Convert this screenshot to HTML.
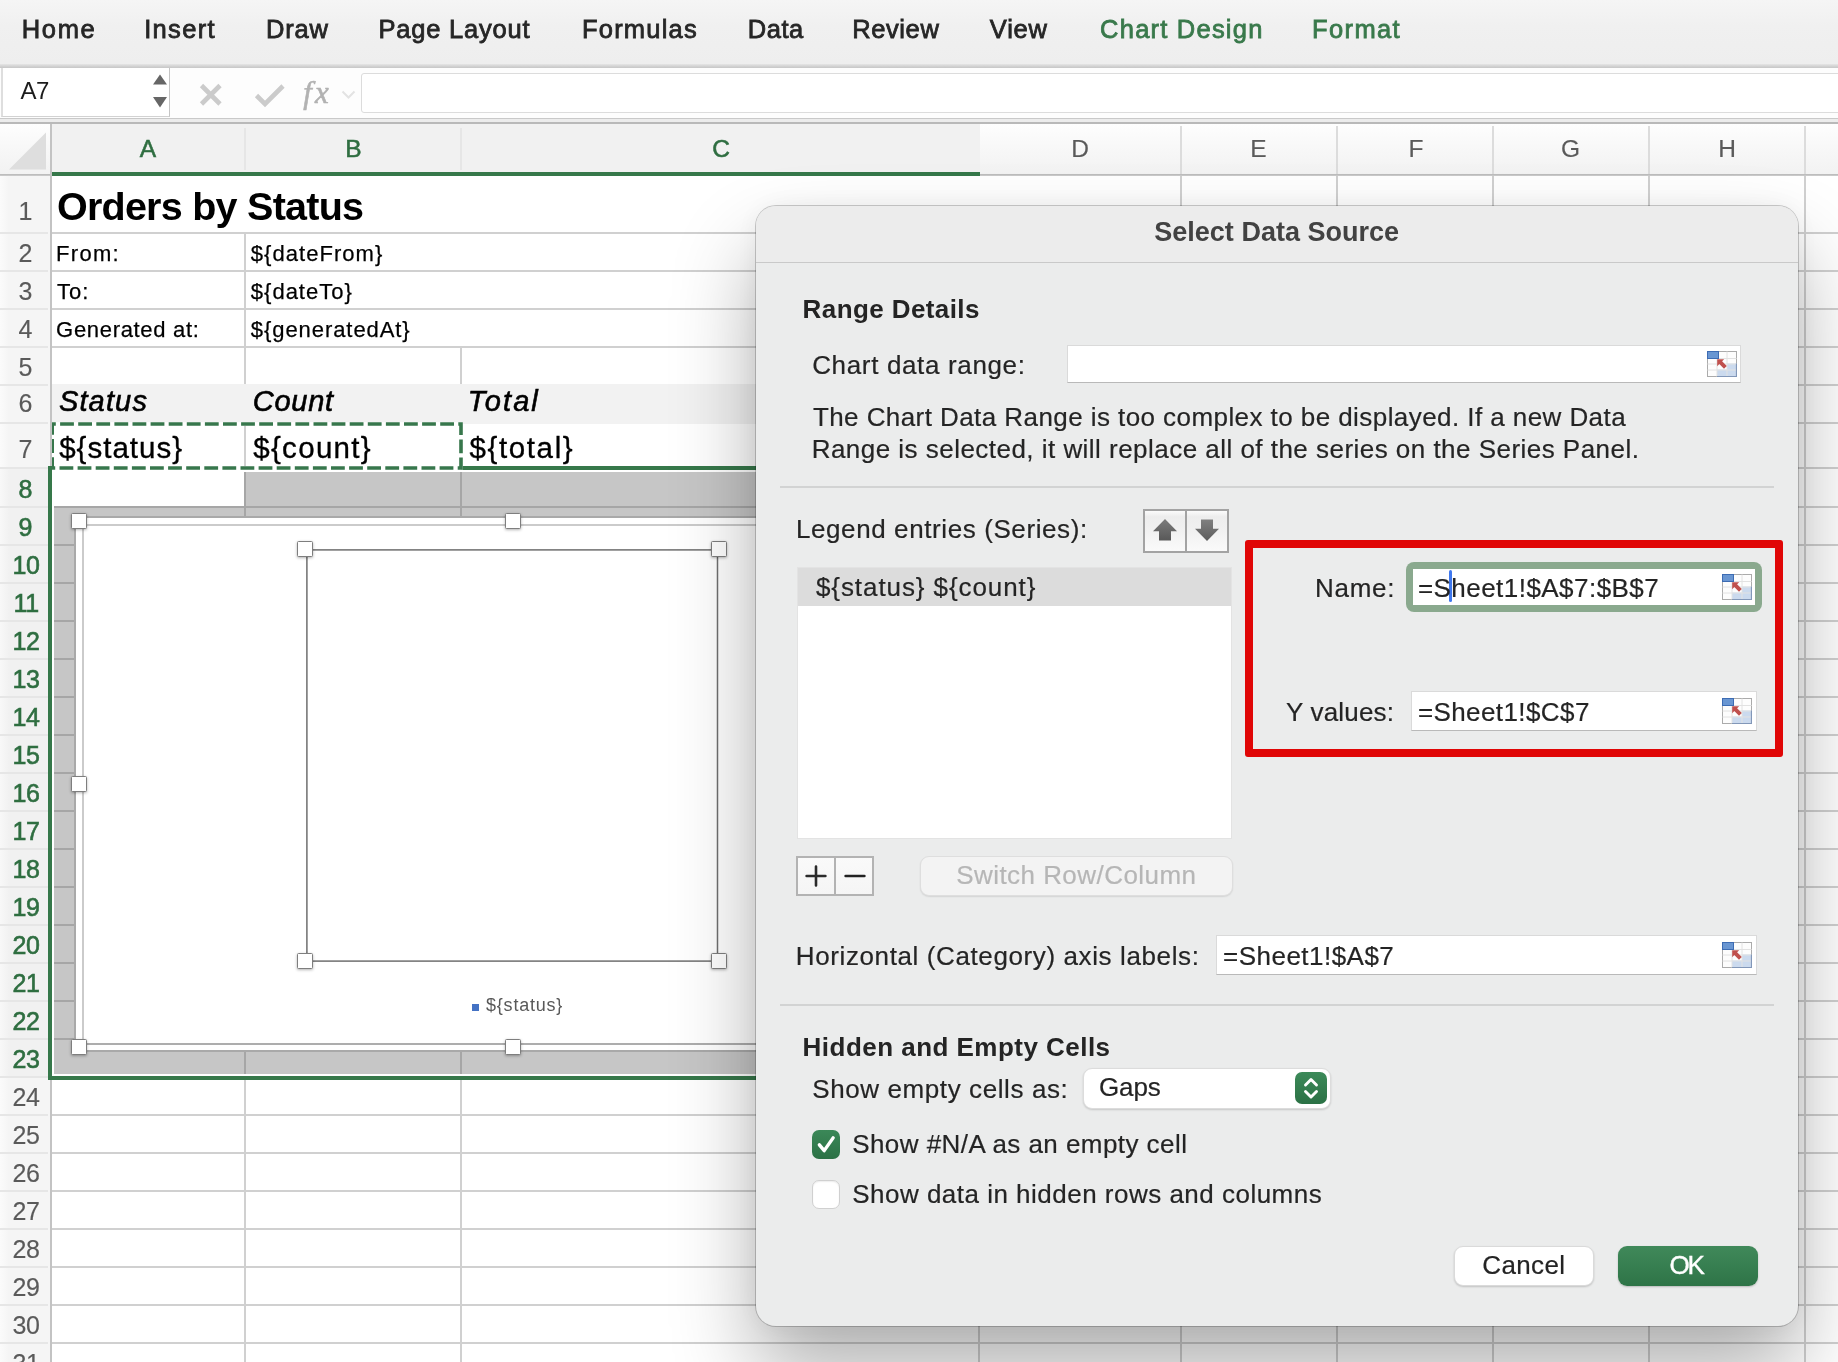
<!DOCTYPE html>
<html lang="en">
<head>
<meta charset="utf-8">
<title>Select Data Source</title>
<style>
html,body{margin:0;padding:0;}
body{width:1838px;height:1362px;overflow:hidden;position:relative;background:#fff;font-family:'Liberation Sans',sans-serif;}
#root{position:absolute;left:0;top:0;width:1838px;height:1362px;overflow:hidden;background:#fff;}
.l{position:absolute;}
.t{position:absolute;white-space:pre;}
#sheet,#chrome,#dialog{will-change:transform;}
.abs{position:absolute;}
.handle{position:absolute;width:14px;height:14px;background:#fff;border:1px solid #7e7e7e;border-radius:1.5px;box-shadow:0 1px 3px rgba(0,0,0,.30);}
.inp{position:absolute;background:#fff;border:1px solid #dadada;border-bottom-color:#b9b9b9;box-sizing:border-box;}
.sep{position:absolute;height:1px;background:#d2d3d3;}
</style>
</head>
<body>
<div id="root">

<!-- ======================= SHEET ======================= -->
<div id="sheet" class="abs" style="left:0;top:0;width:1838px;height:1362px;">
<div class="l" style="left:52.0px;top:231.5px;width:1786.0px;height:2px;background:#d0d0d0"></div>
<div class="l" style="left:52.0px;top:270.0px;width:1786.0px;height:2px;background:#d0d0d0"></div>
<div class="l" style="left:52.0px;top:308.0px;width:1786.0px;height:2px;background:#d0d0d0"></div>
<div class="l" style="left:52.0px;top:346.0px;width:1786.0px;height:2px;background:#d0d0d0"></div>
<div class="l" style="left:52.0px;top:384.0px;width:1786.0px;height:2px;background:#d0d0d0"></div>
<div class="l" style="left:52.0px;top:1114.0px;width:1786.0px;height:2px;background:#d0d0d0"></div>
<div class="l" style="left:52.0px;top:1152.0px;width:1786.0px;height:2px;background:#d0d0d0"></div>
<div class="l" style="left:52.0px;top:1190.0px;width:1786.0px;height:2px;background:#d0d0d0"></div>
<div class="l" style="left:52.0px;top:1228.0px;width:1786.0px;height:2px;background:#d0d0d0"></div>
<div class="l" style="left:52.0px;top:1266.0px;width:1786.0px;height:2px;background:#d0d0d0"></div>
<div class="l" style="left:52.0px;top:1304.0px;width:1786.0px;height:2px;background:#d0d0d0"></div>
<div class="l" style="left:52.0px;top:1342.0px;width:1786.0px;height:2px;background:#d0d0d0"></div>
<div class="l" style="left:52.0px;top:1380.0px;width:1786.0px;height:2px;background:#d0d0d0"></div>
<div class="l" style="left:978.8px;top:422.0px;width:859.2px;height:2px;background:#d0d0d0"></div>
<div class="l" style="left:978.8px;top:467.0px;width:859.2px;height:2px;background:#d0d0d0"></div>
<div class="l" style="left:978.8px;top:506.0px;width:859.2px;height:2px;background:#d0d0d0"></div>
<div class="l" style="left:978.8px;top:544.0px;width:859.2px;height:2px;background:#d0d0d0"></div>
<div class="l" style="left:978.8px;top:582.0px;width:859.2px;height:2px;background:#d0d0d0"></div>
<div class="l" style="left:978.8px;top:620.0px;width:859.2px;height:2px;background:#d0d0d0"></div>
<div class="l" style="left:978.8px;top:658.0px;width:859.2px;height:2px;background:#d0d0d0"></div>
<div class="l" style="left:978.8px;top:696.0px;width:859.2px;height:2px;background:#d0d0d0"></div>
<div class="l" style="left:978.8px;top:734.0px;width:859.2px;height:2px;background:#d0d0d0"></div>
<div class="l" style="left:978.8px;top:772.0px;width:859.2px;height:2px;background:#d0d0d0"></div>
<div class="l" style="left:978.8px;top:810.0px;width:859.2px;height:2px;background:#d0d0d0"></div>
<div class="l" style="left:978.8px;top:848.0px;width:859.2px;height:2px;background:#d0d0d0"></div>
<div class="l" style="left:978.8px;top:886.0px;width:859.2px;height:2px;background:#d0d0d0"></div>
<div class="l" style="left:978.8px;top:924.0px;width:859.2px;height:2px;background:#d0d0d0"></div>
<div class="l" style="left:978.8px;top:962.0px;width:859.2px;height:2px;background:#d0d0d0"></div>
<div class="l" style="left:978.8px;top:1000.0px;width:859.2px;height:2px;background:#d0d0d0"></div>
<div class="l" style="left:978.8px;top:1038.0px;width:859.2px;height:2px;background:#d0d0d0"></div>
<div class="l" style="left:978.8px;top:1076.0px;width:859.2px;height:2px;background:#d0d0d0"></div>
<div class="l" style="left:52.0px;top:467.0px;width:930.0px;height:2px;background:#d0d0d0"></div>
<div class="l" style="left:244.0px;top:232.5px;width:2px;height:152.5px;background:#d0d0d0"></div>
<div class="l" style="left:244.0px;top:423.0px;width:2px;height:45.0px;background:#d0d0d0"></div>
<div class="l" style="left:244.0px;top:1077.0px;width:2px;height:285.0px;background:#d0d0d0"></div>
<div class="l" style="left:460.0px;top:347.0px;width:2px;height:38.0px;background:#d0d0d0"></div>
<div class="l" style="left:460.0px;top:1077.0px;width:2px;height:285.0px;background:#d0d0d0"></div>
<div class="l" style="left:977.8px;top:232.5px;width:2px;height:1129.5px;background:#d0d0d0"></div>
<div class="l" style="left:1179.5px;top:176.0px;width:2px;height:1186.0px;background:#d0d0d0"></div>
<div class="l" style="left:1335.8px;top:176.0px;width:2px;height:1186.0px;background:#d0d0d0"></div>
<div class="l" style="left:1492.0px;top:176.0px;width:2px;height:1186.0px;background:#d0d0d0"></div>
<div class="l" style="left:1648.3px;top:176.0px;width:2px;height:1186.0px;background:#d0d0d0"></div>
<div class="l" style="left:1804.0px;top:176.0px;width:2px;height:1186.0px;background:#d0d0d0"></div>
<div class="l" style="left:52.0px;top:384.0px;width:927.8px;height:39.5px;background:#f2f2f2"></div>
<div class="l" style="left:54.0px;top:507.0px;width:924.8px;height:567.0px;background:#c6c6c6"></div>
<div class="l" style="left:245.0px;top:471.5px;width:733.8px;height:36.5px;background:#c6c6c6"></div>
<div class="l" style="left:54.0px;top:544.0px;width:924.8px;height:2px;background:#a6a6a6"></div>
<div class="l" style="left:54.0px;top:582.0px;width:924.8px;height:2px;background:#a6a6a6"></div>
<div class="l" style="left:54.0px;top:620.0px;width:924.8px;height:2px;background:#a6a6a6"></div>
<div class="l" style="left:54.0px;top:658.0px;width:924.8px;height:2px;background:#a6a6a6"></div>
<div class="l" style="left:54.0px;top:696.0px;width:924.8px;height:2px;background:#a6a6a6"></div>
<div class="l" style="left:54.0px;top:734.0px;width:924.8px;height:2px;background:#a6a6a6"></div>
<div class="l" style="left:54.0px;top:772.0px;width:924.8px;height:2px;background:#a6a6a6"></div>
<div class="l" style="left:54.0px;top:810.0px;width:924.8px;height:2px;background:#a6a6a6"></div>
<div class="l" style="left:54.0px;top:848.0px;width:924.8px;height:2px;background:#a6a6a6"></div>
<div class="l" style="left:54.0px;top:886.0px;width:924.8px;height:2px;background:#a6a6a6"></div>
<div class="l" style="left:54.0px;top:924.0px;width:924.8px;height:2px;background:#a6a6a6"></div>
<div class="l" style="left:54.0px;top:962.0px;width:924.8px;height:2px;background:#a6a6a6"></div>
<div class="l" style="left:54.0px;top:1000.0px;width:924.8px;height:2px;background:#a6a6a6"></div>
<div class="l" style="left:54.0px;top:1038.0px;width:924.8px;height:2px;background:#a6a6a6"></div>
<div class="l" style="left:54.0px;top:506.0px;width:924.8px;height:2px;background:#a6a6a6"></div>
<div class="l" style="left:244.0px;top:471.5px;width:2px;height:602.5px;background:#a6a6a6"></div>
<div class="l" style="left:460.0px;top:471.5px;width:2px;height:602.5px;background:#a6a6a6"></div>

<!-- chart object -->
<div class="abs" style="left:74px;top:516px;width:912px;height:532px;background:#fff;border:2px solid #a9a9a9;"></div>
<div class="abs" style="left:82px;top:524px;width:900px;height:516.5px;border:2px solid #cbcbcb;border-bottom-color:#adadad;background:#fff;"></div>
<svg class="abs" style="left:300px;top:543px;" width="424" height="424" viewBox="0 0 424 424"><rect x="6.9" y="6.9" width="410.6" height="411.2" fill="none" stroke="#6f6f6f" stroke-width="1.5"/></svg>
<div class="abs" style="left:471.5px;top:1004px;width:7.5px;height:7px;background:#4472c4;"></div>
<div class="handle" style="left:71px;top:513px;"></div>
<div class="handle" style="left:505px;top:513px;"></div>
<div class="handle" style="left:71px;top:776px;"></div>
<div class="handle" style="left:71px;top:1039px;"></div>
<div class="handle" style="left:505px;top:1039px;"></div>
<div class="handle" style="left:297px;top:541px;"></div>
<div class="handle" style="left:711px;top:541px;"></div>
<div class="handle" style="left:297px;top:953px;"></div>
<div class="handle" style="left:711px;top:953px;"></div>

<!-- selection borders -->
<div class="abs" style="left:461px;top:465.5px;width:600px;height:4px;background:#36784a;"></div>
<div class="abs" style="left:48px;top:466px;width:4px;height:614px;background:#36784a;"></div>
<div class="abs" style="left:48px;top:1076px;width:935px;height:4px;background:#36784a;"></div>
<!-- marching ants A7:B7 -->
<svg class="abs" style="left:48px;top:418px;" width="420" height="56" viewBox="0 0 420 56">
  <rect x="4.2" y="6" width="408.8" height="44" fill="none" stroke="#fff" stroke-width="3.6"/>
  <rect x="4.2" y="6" width="408.8" height="44" fill="none" stroke="#37774c" stroke-width="3.6" stroke-dasharray="13.8 4.3" stroke-dashoffset="10.2"/>
</svg>

<!-- column header band -->
<div class="abs" style="left:0;top:123px;width:1838px;height:52px;background:linear-gradient(180deg,#fefefe 0,#f8f8f8 45%,#f2f2f2 100%);"></div>
<div class="abs" style="left:0;top:174px;width:1838px;height:2px;background:linear-gradient(180deg,#bdbdbd 0,#bdbdbd 60%,#dedede 100%);"></div>
<div class="abs" style="left:52px;top:172px;width:928px;height:4px;background:#36784a;"></div>
<div class="abs" style="left:52px;top:123px;width:928px;height:49px;background:#f1f1f1;"></div>
<!-- header separators -->
<div class="l" style="left:244px;top:128px;width:2px;height:42px;background:#e6e6e6"></div>
<div class="l" style="left:460px;top:128px;width:2px;height:42px;background:#e6e6e6"></div>
<div class="l" style="left:1179.5px;top:126px;width:2px;height:48px;background:#dcdcdc"></div>
<div class="l" style="left:1335.8px;top:126px;width:2px;height:48px;background:#dcdcdc"></div>
<div class="l" style="left:1492px;top:126px;width:2px;height:48px;background:#dcdcdc"></div>
<div class="l" style="left:1648.3px;top:126px;width:2px;height:48px;background:#dcdcdc"></div>
<div class="l" style="left:1804px;top:126px;width:2px;height:48px;background:#dcdcdc"></div>

<!-- row header band -->
<div class="abs" style="left:0;top:176px;width:50px;height:1186px;background:linear-gradient(90deg,#fbfbfb 0,#f5f5f5 9px,#f5f5f5 100%);"></div>
<div class="abs" style="left:0;top:468px;width:48px;height:610px;background:linear-gradient(90deg,#f8f8f8 0,#f1f1f1 9px,#f1f1f1 100%);"></div>
<div class="abs" style="left:50px;top:124px;width:2px;height:1238px;background:#c3c3c3;"></div>
<div class="abs" style="left:48px;top:466px;width:4px;height:614px;background:#36784a;"></div>
<!-- select-all triangle -->
<svg class="abs" style="left:0;top:123px;" width="52" height="52" viewBox="0 0 52 52"><path d="M46 9.5V46.5H9z" fill="#dedede"/></svg>
<div class="l" style="left:0.0px;top:231.5px;width:48.0px;height:2px;background:#e6e6e6"></div>
<div class="l" style="left:0.0px;top:270.0px;width:48.0px;height:2px;background:#e6e6e6"></div>
<div class="l" style="left:0.0px;top:308.0px;width:48.0px;height:2px;background:#e6e6e6"></div>
<div class="l" style="left:0.0px;top:346.0px;width:48.0px;height:2px;background:#e6e6e6"></div>
<div class="l" style="left:0.0px;top:384.0px;width:48.0px;height:2px;background:#e6e6e6"></div>
<div class="l" style="left:0.0px;top:422.0px;width:48.0px;height:2px;background:#e6e6e6"></div>
<div class="l" style="left:0.0px;top:467.0px;width:48.0px;height:2px;background:#e6e6e6"></div>
<div class="l" style="left:0.0px;top:506.0px;width:48.0px;height:2px;background:#e6e6e6"></div>
<div class="l" style="left:0.0px;top:544.0px;width:48.0px;height:2px;background:#e6e6e6"></div>
<div class="l" style="left:0.0px;top:582.0px;width:48.0px;height:2px;background:#e6e6e6"></div>
<div class="l" style="left:0.0px;top:620.0px;width:48.0px;height:2px;background:#e6e6e6"></div>
<div class="l" style="left:0.0px;top:658.0px;width:48.0px;height:2px;background:#e6e6e6"></div>
<div class="l" style="left:0.0px;top:696.0px;width:48.0px;height:2px;background:#e6e6e6"></div>
<div class="l" style="left:0.0px;top:734.0px;width:48.0px;height:2px;background:#e6e6e6"></div>
<div class="l" style="left:0.0px;top:772.0px;width:48.0px;height:2px;background:#e6e6e6"></div>
<div class="l" style="left:0.0px;top:810.0px;width:48.0px;height:2px;background:#e6e6e6"></div>
<div class="l" style="left:0.0px;top:848.0px;width:48.0px;height:2px;background:#e6e6e6"></div>
<div class="l" style="left:0.0px;top:886.0px;width:48.0px;height:2px;background:#e6e6e6"></div>
<div class="l" style="left:0.0px;top:924.0px;width:48.0px;height:2px;background:#e6e6e6"></div>
<div class="l" style="left:0.0px;top:962.0px;width:48.0px;height:2px;background:#e6e6e6"></div>
<div class="l" style="left:0.0px;top:1000.0px;width:48.0px;height:2px;background:#e6e6e6"></div>
<div class="l" style="left:0.0px;top:1038.0px;width:48.0px;height:2px;background:#e6e6e6"></div>
<div class="l" style="left:0.0px;top:1076.0px;width:48.0px;height:2px;background:#e6e6e6"></div>
<div class="l" style="left:0.0px;top:1114.0px;width:48.0px;height:2px;background:#e6e6e6"></div>
<div class="l" style="left:0.0px;top:1152.0px;width:48.0px;height:2px;background:#e6e6e6"></div>
<div class="l" style="left:0.0px;top:1190.0px;width:48.0px;height:2px;background:#e6e6e6"></div>
<div class="l" style="left:0.0px;top:1228.0px;width:48.0px;height:2px;background:#e6e6e6"></div>
<div class="l" style="left:0.0px;top:1266.0px;width:48.0px;height:2px;background:#e6e6e6"></div>
<div class="l" style="left:0.0px;top:1304.0px;width:48.0px;height:2px;background:#e6e6e6"></div>
<div class="l" style="left:0.0px;top:1342.0px;width:48.0px;height:2px;background:#e6e6e6"></div>
<div class="l" style="left:0.0px;top:1380.0px;width:48.0px;height:2px;background:#e6e6e6"></div>

<span class="t" style="left:148.00px;top:137.3px;font-family:'Liberation Sans', sans-serif;font-size:24.5px;line-height:24.5px;font-weight:400;font-style:normal;color:#2f6e41;letter-spacing:0.00px;-webkit-text-stroke:0.55px #2f6e41;transform:translateX(-50%);">A</span>
<span class="t" style="left:353.50px;top:137.3px;font-family:'Liberation Sans', sans-serif;font-size:24.5px;line-height:24.5px;font-weight:400;font-style:normal;color:#2f6e41;letter-spacing:0.00px;-webkit-text-stroke:0.55px #2f6e41;transform:translateX(-50%);">B</span>
<span class="t" style="left:721.00px;top:137.3px;font-family:'Liberation Sans', sans-serif;font-size:24.5px;line-height:24.5px;font-weight:400;font-style:normal;color:#2f6e41;letter-spacing:0.00px;-webkit-text-stroke:0.55px #2f6e41;transform:translateX(-50%);">C</span>
<span class="t" style="left:1080.00px;top:137.3px;font-family:'Liberation Sans', sans-serif;font-size:24.5px;line-height:24.5px;font-weight:400;font-style:normal;color:#5a5a5a;letter-spacing:0.00px;-webkit-text-stroke:0.15px #5a5a5a;transform:translateX(-50%);">D</span>
<span class="t" style="left:1258.50px;top:137.3px;font-family:'Liberation Sans', sans-serif;font-size:24.5px;line-height:24.5px;font-weight:400;font-style:normal;color:#5a5a5a;letter-spacing:0.00px;-webkit-text-stroke:0.15px #5a5a5a;transform:translateX(-50%);">E</span>
<span class="t" style="left:1416.00px;top:137.3px;font-family:'Liberation Sans', sans-serif;font-size:24.5px;line-height:24.5px;font-weight:400;font-style:normal;color:#5a5a5a;letter-spacing:0.00px;-webkit-text-stroke:0.15px #5a5a5a;transform:translateX(-50%);">F</span>
<span class="t" style="left:1570.50px;top:137.3px;font-family:'Liberation Sans', sans-serif;font-size:24.5px;line-height:24.5px;font-weight:400;font-style:normal;color:#5a5a5a;letter-spacing:0.00px;-webkit-text-stroke:0.15px #5a5a5a;transform:translateX(-50%);">G</span>
<span class="t" style="left:1727.00px;top:137.3px;font-family:'Liberation Sans', sans-serif;font-size:24.5px;line-height:24.5px;font-weight:400;font-style:normal;color:#5a5a5a;letter-spacing:0.00px;-webkit-text-stroke:0.15px #5a5a5a;transform:translateX(-50%);">H</span>
<span class="t" style="left:25.20px;top:198.7px;font-family:'Liberation Sans', sans-serif;font-size:25px;line-height:25px;font-weight:400;font-style:normal;color:#5a5a5a;letter-spacing:0.00px;-webkit-text-stroke:0.15px #5a5a5a;transform:translateX(-50%);letter-spacing:-0.3px;">1</span>
<span class="t" style="left:25.20px;top:240.8px;font-family:'Liberation Sans', sans-serif;font-size:25px;line-height:25px;font-weight:400;font-style:normal;color:#5a5a5a;letter-spacing:0.00px;-webkit-text-stroke:0.15px #5a5a5a;transform:translateX(-50%);letter-spacing:-0.3px;">2</span>
<span class="t" style="left:25.20px;top:278.8px;font-family:'Liberation Sans', sans-serif;font-size:25px;line-height:25px;font-weight:400;font-style:normal;color:#5a5a5a;letter-spacing:0.00px;-webkit-text-stroke:0.15px #5a5a5a;transform:translateX(-50%);letter-spacing:-0.3px;">3</span>
<span class="t" style="left:25.20px;top:316.8px;font-family:'Liberation Sans', sans-serif;font-size:25px;line-height:25px;font-weight:400;font-style:normal;color:#5a5a5a;letter-spacing:0.00px;-webkit-text-stroke:0.15px #5a5a5a;transform:translateX(-50%);letter-spacing:-0.3px;">4</span>
<span class="t" style="left:25.20px;top:354.8px;font-family:'Liberation Sans', sans-serif;font-size:25px;line-height:25px;font-weight:400;font-style:normal;color:#5a5a5a;letter-spacing:0.00px;-webkit-text-stroke:0.15px #5a5a5a;transform:translateX(-50%);letter-spacing:-0.3px;">5</span>
<span class="t" style="left:25.20px;top:390.6px;font-family:'Liberation Sans', sans-serif;font-size:25px;line-height:25px;font-weight:400;font-style:normal;color:#5a5a5a;letter-spacing:0.00px;-webkit-text-stroke:0.15px #5a5a5a;transform:translateX(-50%);letter-spacing:-0.3px;">6</span>
<span class="t" style="left:25.20px;top:436.5px;font-family:'Liberation Sans', sans-serif;font-size:25px;line-height:25px;font-weight:400;font-style:normal;color:#5a5a5a;letter-spacing:0.00px;-webkit-text-stroke:0.15px #5a5a5a;transform:translateX(-50%);letter-spacing:-0.3px;">7</span>
<span class="t" style="left:25.20px;top:477.3px;font-family:'Liberation Sans', sans-serif;font-size:25px;line-height:25px;font-weight:400;font-style:normal;color:#2f6e41;letter-spacing:0.00px;-webkit-text-stroke:0.6px #2f6e41;transform:translateX(-50%);letter-spacing:-0.3px;">8</span>
<span class="t" style="left:25.20px;top:515.3px;font-family:'Liberation Sans', sans-serif;font-size:25px;line-height:25px;font-weight:400;font-style:normal;color:#2f6e41;letter-spacing:0.00px;-webkit-text-stroke:0.6px #2f6e41;transform:translateX(-50%);letter-spacing:-0.3px;">9</span>
<span class="t" style="left:26.10px;top:553.3px;font-family:'Liberation Sans', sans-serif;font-size:25px;line-height:25px;font-weight:400;font-style:normal;color:#2f6e41;letter-spacing:0.00px;-webkit-text-stroke:0.6px #2f6e41;transform:translateX(-50%);letter-spacing:-0.3px;">10</span>
<span class="t" style="left:26.10px;top:591.3px;font-family:'Liberation Sans', sans-serif;font-size:25px;line-height:25px;font-weight:400;font-style:normal;color:#2f6e41;letter-spacing:0.00px;-webkit-text-stroke:0.6px #2f6e41;transform:translateX(-50%);letter-spacing:-0.3px;">11</span>
<span class="t" style="left:26.10px;top:629.3px;font-family:'Liberation Sans', sans-serif;font-size:25px;line-height:25px;font-weight:400;font-style:normal;color:#2f6e41;letter-spacing:0.00px;-webkit-text-stroke:0.6px #2f6e41;transform:translateX(-50%);letter-spacing:-0.3px;">12</span>
<span class="t" style="left:26.10px;top:667.3px;font-family:'Liberation Sans', sans-serif;font-size:25px;line-height:25px;font-weight:400;font-style:normal;color:#2f6e41;letter-spacing:0.00px;-webkit-text-stroke:0.6px #2f6e41;transform:translateX(-50%);letter-spacing:-0.3px;">13</span>
<span class="t" style="left:26.10px;top:705.3px;font-family:'Liberation Sans', sans-serif;font-size:25px;line-height:25px;font-weight:400;font-style:normal;color:#2f6e41;letter-spacing:0.00px;-webkit-text-stroke:0.6px #2f6e41;transform:translateX(-50%);letter-spacing:-0.3px;">14</span>
<span class="t" style="left:26.10px;top:743.3px;font-family:'Liberation Sans', sans-serif;font-size:25px;line-height:25px;font-weight:400;font-style:normal;color:#2f6e41;letter-spacing:0.00px;-webkit-text-stroke:0.6px #2f6e41;transform:translateX(-50%);letter-spacing:-0.3px;">15</span>
<span class="t" style="left:26.10px;top:781.3px;font-family:'Liberation Sans', sans-serif;font-size:25px;line-height:25px;font-weight:400;font-style:normal;color:#2f6e41;letter-spacing:0.00px;-webkit-text-stroke:0.6px #2f6e41;transform:translateX(-50%);letter-spacing:-0.3px;">16</span>
<span class="t" style="left:26.10px;top:819.3px;font-family:'Liberation Sans', sans-serif;font-size:25px;line-height:25px;font-weight:400;font-style:normal;color:#2f6e41;letter-spacing:0.00px;-webkit-text-stroke:0.6px #2f6e41;transform:translateX(-50%);letter-spacing:-0.3px;">17</span>
<span class="t" style="left:26.10px;top:857.3px;font-family:'Liberation Sans', sans-serif;font-size:25px;line-height:25px;font-weight:400;font-style:normal;color:#2f6e41;letter-spacing:0.00px;-webkit-text-stroke:0.6px #2f6e41;transform:translateX(-50%);letter-spacing:-0.3px;">18</span>
<span class="t" style="left:26.10px;top:895.3px;font-family:'Liberation Sans', sans-serif;font-size:25px;line-height:25px;font-weight:400;font-style:normal;color:#2f6e41;letter-spacing:0.00px;-webkit-text-stroke:0.6px #2f6e41;transform:translateX(-50%);letter-spacing:-0.3px;">19</span>
<span class="t" style="left:26.10px;top:933.3px;font-family:'Liberation Sans', sans-serif;font-size:25px;line-height:25px;font-weight:400;font-style:normal;color:#2f6e41;letter-spacing:0.00px;-webkit-text-stroke:0.6px #2f6e41;transform:translateX(-50%);letter-spacing:-0.3px;">20</span>
<span class="t" style="left:26.10px;top:971.3px;font-family:'Liberation Sans', sans-serif;font-size:25px;line-height:25px;font-weight:400;font-style:normal;color:#2f6e41;letter-spacing:0.00px;-webkit-text-stroke:0.6px #2f6e41;transform:translateX(-50%);letter-spacing:-0.3px;">21</span>
<span class="t" style="left:26.10px;top:1009.3px;font-family:'Liberation Sans', sans-serif;font-size:25px;line-height:25px;font-weight:400;font-style:normal;color:#2f6e41;letter-spacing:0.00px;-webkit-text-stroke:0.6px #2f6e41;transform:translateX(-50%);letter-spacing:-0.3px;">22</span>
<span class="t" style="left:26.10px;top:1047.3px;font-family:'Liberation Sans', sans-serif;font-size:25px;line-height:25px;font-weight:400;font-style:normal;color:#2f6e41;letter-spacing:0.00px;-webkit-text-stroke:0.6px #2f6e41;transform:translateX(-50%);letter-spacing:-0.3px;">23</span>
<span class="t" style="left:26.10px;top:1085.3px;font-family:'Liberation Sans', sans-serif;font-size:25px;line-height:25px;font-weight:400;font-style:normal;color:#5a5a5a;letter-spacing:0.00px;-webkit-text-stroke:0.15px #5a5a5a;transform:translateX(-50%);letter-spacing:-0.3px;">24</span>
<span class="t" style="left:26.10px;top:1123.3px;font-family:'Liberation Sans', sans-serif;font-size:25px;line-height:25px;font-weight:400;font-style:normal;color:#5a5a5a;letter-spacing:0.00px;-webkit-text-stroke:0.15px #5a5a5a;transform:translateX(-50%);letter-spacing:-0.3px;">25</span>
<span class="t" style="left:26.10px;top:1161.3px;font-family:'Liberation Sans', sans-serif;font-size:25px;line-height:25px;font-weight:400;font-style:normal;color:#5a5a5a;letter-spacing:0.00px;-webkit-text-stroke:0.15px #5a5a5a;transform:translateX(-50%);letter-spacing:-0.3px;">26</span>
<span class="t" style="left:26.10px;top:1199.3px;font-family:'Liberation Sans', sans-serif;font-size:25px;line-height:25px;font-weight:400;font-style:normal;color:#5a5a5a;letter-spacing:0.00px;-webkit-text-stroke:0.15px #5a5a5a;transform:translateX(-50%);letter-spacing:-0.3px;">27</span>
<span class="t" style="left:26.10px;top:1237.3px;font-family:'Liberation Sans', sans-serif;font-size:25px;line-height:25px;font-weight:400;font-style:normal;color:#5a5a5a;letter-spacing:0.00px;-webkit-text-stroke:0.15px #5a5a5a;transform:translateX(-50%);letter-spacing:-0.3px;">28</span>
<span class="t" style="left:26.10px;top:1275.3px;font-family:'Liberation Sans', sans-serif;font-size:25px;line-height:25px;font-weight:400;font-style:normal;color:#5a5a5a;letter-spacing:0.00px;-webkit-text-stroke:0.15px #5a5a5a;transform:translateX(-50%);letter-spacing:-0.3px;">29</span>
<span class="t" style="left:26.10px;top:1313.3px;font-family:'Liberation Sans', sans-serif;font-size:25px;line-height:25px;font-weight:400;font-style:normal;color:#5a5a5a;letter-spacing:0.00px;-webkit-text-stroke:0.15px #5a5a5a;transform:translateX(-50%);letter-spacing:-0.3px;">30</span>
<span class="t" style="left:26.10px;top:1351.3px;font-family:'Liberation Sans', sans-serif;font-size:25px;line-height:25px;font-weight:400;font-style:normal;color:#5a5a5a;letter-spacing:0.00px;-webkit-text-stroke:0.15px #5a5a5a;transform:translateX(-50%);letter-spacing:-0.3px;">31</span>
<span class="t" style="left:56.90px;top:186.8px;font-family:'Liberation Sans', sans-serif;font-size:39.5px;line-height:39.5px;font-weight:700;font-style:normal;color:#000;letter-spacing:-0.74px;">Orders by Status</span>
<span class="t" style="left:56.12px;top:243.0px;font-family:'Liberation Sans', sans-serif;font-size:22px;line-height:22px;font-weight:400;font-style:normal;color:#000;letter-spacing:1.28px;-webkit-text-stroke:0.25px #000;">From:</span>
<span class="t" style="left:250.82px;top:243.0px;font-family:'Liberation Sans', sans-serif;font-size:22px;line-height:22px;font-weight:400;font-style:normal;color:#000;letter-spacing:1.04px;-webkit-text-stroke:0.25px #000;">${dateFrom}</span>
<span class="t" style="left:57.12px;top:281.0px;font-family:'Liberation Sans', sans-serif;font-size:22px;line-height:22px;font-weight:400;font-style:normal;color:#000;letter-spacing:0.96px;-webkit-text-stroke:0.25px #000;">To:</span>
<span class="t" style="left:250.82px;top:281.0px;font-family:'Liberation Sans', sans-serif;font-size:22px;line-height:22px;font-weight:400;font-style:normal;color:#000;letter-spacing:1.00px;-webkit-text-stroke:0.25px #000;">${dateTo}</span>
<span class="t" style="left:56.12px;top:319.4px;font-family:'Liberation Sans', sans-serif;font-size:22px;line-height:22px;font-weight:400;font-style:normal;color:#000;letter-spacing:0.68px;-webkit-text-stroke:0.25px #000;">Generated at:</span>
<span class="t" style="left:250.82px;top:319.4px;font-family:'Liberation Sans', sans-serif;font-size:22px;line-height:22px;font-weight:400;font-style:normal;color:#000;letter-spacing:0.93px;-webkit-text-stroke:0.25px #000;">${generatedAt}</span>
<span class="t" style="left:58.90px;top:387.2px;font-family:'Liberation Sans', sans-serif;font-size:29px;line-height:29px;font-weight:400;font-style:italic;color:#000;letter-spacing:1.16px;-webkit-text-stroke:0.6px #000;">Status</span>
<span class="t" style="left:252.80px;top:387.2px;font-family:'Liberation Sans', sans-serif;font-size:29px;line-height:29px;font-weight:400;font-style:italic;color:#000;letter-spacing:0.72px;-webkit-text-stroke:0.6px #000;">Count</span>
<span class="t" style="left:467.70px;top:387.2px;font-family:'Liberation Sans', sans-serif;font-size:29px;line-height:29px;font-weight:400;font-style:italic;color:#000;letter-spacing:2.08px;-webkit-text-stroke:0.6px #000;">Total</span>
<span class="t" style="left:59.17px;top:432.8px;font-family:'Liberation Sans', sans-serif;font-size:29.5px;line-height:29.5px;font-weight:400;font-style:normal;color:#000;letter-spacing:1.01px;-webkit-text-stroke:0.35px #000;">${status}</span>
<span class="t" style="left:253.28px;top:432.8px;font-family:'Liberation Sans', sans-serif;font-size:29.5px;line-height:29.5px;font-weight:400;font-style:normal;color:#000;letter-spacing:1.30px;-webkit-text-stroke:0.35px #000;">${count}</span>
<span class="t" style="left:469.57px;top:432.8px;font-family:'Liberation Sans', sans-serif;font-size:29.5px;line-height:29.5px;font-weight:400;font-style:normal;color:#000;letter-spacing:1.60px;-webkit-text-stroke:0.35px #000;">${total}</span>
<span class="t" style="left:486.00px;top:996.4px;font-family:'Liberation Sans', sans-serif;font-size:18px;line-height:18px;font-weight:400;font-style:normal;color:#595959;letter-spacing:0.79px;">${status}</span>
</div>

<!-- ======================= CHROME (ribbon + formula bar) ======================= -->
<div id="chrome" class="abs" style="left:0;top:0;width:1838px;height:123px;background:#fff;">
  <div class="abs" style="left:0;top:0;width:1838px;height:64px;background:linear-gradient(180deg,#f5f5f5 0,#f0f0f0 40%,#eeeeee 100%);"></div>
  <div class="abs" style="left:0;top:63.5px;width:1838px;height:4.5px;background:linear-gradient(180deg,#e6e6e6 0,#d6d6d6 45%,#c6c6c6 100%);"></div>
  <div class="abs" style="left:0;top:68px;width:1838px;height:50px;background:#fdfdfd;"></div>
  <!-- name box -->
  <div class="abs" style="left:1px;top:68px;width:169px;height:49px;background:#fff;border-left:2px solid #dedede;border-right:1.5px solid #c4c4c4;border-bottom:1.5px solid #d2d2d2;box-sizing:border-box;"></div>
  <svg class="abs" style="left:150px;top:72px;" width="20" height="40" viewBox="0 0 20 40">
    <path d="M3 12.5L10 2.5L17 12.5z" fill="#666"/><path d="M3 25L10 35.5L17 25z" fill="#666"/></svg>
  <!-- cancel / enter / fx -->
  <svg class="abs" style="left:198px;top:82px;" width="26" height="26" viewBox="0 0 26 26"><path d="M3.5 3.5L22 22M22 3.5L3.5 22" stroke="#cbcbcb" stroke-width="4.6" fill="none" stroke-linecap="butt"/></svg>
  <svg class="abs" style="left:253px;top:82px;" width="34" height="26" viewBox="0 0 34 26"><path d="M3.5 13.5L12 22L30 4" stroke="#cbcbcb" stroke-width="4.6" fill="none"/></svg>
  <svg class="abs" style="left:340px;top:88px;" width="18" height="14" viewBox="0 0 18 14"><path d="M2.5 3.5L8.5 9.5L14.5 3.5" stroke="#e3e3e3" stroke-width="2" fill="none"/></svg>
  <!-- formula input -->
  <div class="abs" style="left:361px;top:73px;width:1490px;height:39.5px;background:#fff;border:1px solid #dcdcdc;border-radius:3px;box-sizing:border-box;"></div>
  <!-- bottom double line -->
  <div class="abs" style="left:0;top:117.5px;width:1838px;height:1.5px;background:#c9c9c9;"></div>
  <div class="abs" style="left:0;top:119px;width:1838px;height:3px;background:#ececec;"></div>
  <div class="abs" style="left:0;top:121.5px;width:1838px;height:2px;background:#b9b9b9;"></div>
<span class="t" style="left:21.80px;top:16.8px;font-family:'Liberation Sans', sans-serif;font-size:25.5px;line-height:25.5px;font-weight:400;font-style:normal;color:#262626;letter-spacing:1.65px;-webkit-text-stroke:0.8px #262626;">Home</span>
<span class="t" style="left:144.20px;top:16.8px;font-family:'Liberation Sans', sans-serif;font-size:25.5px;line-height:25.5px;font-weight:400;font-style:normal;color:#262626;letter-spacing:1.32px;-webkit-text-stroke:0.8px #262626;">Insert</span>
<span class="t" style="left:265.90px;top:16.8px;font-family:'Liberation Sans', sans-serif;font-size:25.5px;line-height:25.5px;font-weight:400;font-style:normal;color:#262626;letter-spacing:0.87px;-webkit-text-stroke:0.8px #262626;">Draw</span>
<span class="t" style="left:378.40px;top:16.8px;font-family:'Liberation Sans', sans-serif;font-size:25.5px;line-height:25.5px;font-weight:400;font-style:normal;color:#262626;letter-spacing:0.81px;-webkit-text-stroke:0.8px #262626;">Page Layout</span>
<span class="t" style="left:582.00px;top:16.8px;font-family:'Liberation Sans', sans-serif;font-size:25.5px;line-height:25.5px;font-weight:400;font-style:normal;color:#262626;letter-spacing:1.20px;-webkit-text-stroke:0.8px #262626;">Formulas</span>
<span class="t" style="left:747.70px;top:16.8px;font-family:'Liberation Sans', sans-serif;font-size:25.5px;line-height:25.5px;font-weight:400;font-style:normal;color:#262626;letter-spacing:0.57px;-webkit-text-stroke:0.8px #262626;">Data</span>
<span class="t" style="left:852.20px;top:16.8px;font-family:'Liberation Sans', sans-serif;font-size:25.5px;line-height:25.5px;font-weight:400;font-style:normal;color:#262626;letter-spacing:0.60px;-webkit-text-stroke:0.8px #262626;">Review</span>
<span class="t" style="left:989.80px;top:16.8px;font-family:'Liberation Sans', sans-serif;font-size:25.5px;line-height:25.5px;font-weight:400;font-style:normal;color:#262626;letter-spacing:0.80px;-webkit-text-stroke:0.8px #262626;">View</span>
<span class="t" style="left:1100.10px;top:16.8px;font-family:'Liberation Sans', sans-serif;font-size:25.5px;line-height:25.5px;font-weight:400;font-style:normal;color:#39794b;letter-spacing:1.22px;-webkit-text-stroke:0.8px #39794b;">Chart Design</span>
<span class="t" style="left:1312.10px;top:16.8px;font-family:'Liberation Sans', sans-serif;font-size:25.5px;line-height:25.5px;font-weight:400;font-style:normal;color:#39794b;letter-spacing:1.37px;-webkit-text-stroke:0.8px #39794b;">Format</span>
<span class="t" style="left:20.50px;top:79.3px;font-family:'Liberation Sans', sans-serif;font-size:24px;line-height:24px;font-weight:400;font-style:normal;color:#1c1c1c;letter-spacing:-0.51px;">A7</span>
<span class="t" style="left:303.30px;top:76.5px;font-family:'Liberation Serif', serif;font-size:31px;line-height:31px;font-weight:400;font-style:italic;color:#b2b2b2;letter-spacing:3.00px;-webkit-text-stroke:0.6px #b2b2b2;">fx</span>
</div>

<!-- ======================= DIALOG ======================= -->
<div id="dialog" class="abs" style="left:0;top:0;width:1838px;height:1362px;">
  <!-- window body + shadow -->
  <div class="abs" style="left:756px;top:205.5px;width:1042px;height:1120.5px;border-radius:20px;background:#ebecec;box-shadow:0 0 0 1px rgba(0,0,0,.20),0 46px 84px 0 rgba(0,0,0,.31),0 0 30px rgba(0,0,0,.06);"></div>
  <div class="abs" style="left:756px;top:205.5px;width:1042px;height:57px;border-radius:20px 20px 0 0;background:#ececec;"></div>
  <div class="abs" style="left:756px;top:262px;width:1042px;height:1px;background:#c9c9c9;"></div>

  <!-- chart data range input -->
  <div class="inp" style="left:1067px;top:345px;width:674px;height:38px;"></div>
  <svg class="abs" style="left:1707px;top:351px;" width="30" height="26" viewBox="0 0 30 26">
    <rect x="0.5" y="0.5" width="29" height="25" fill="#fdfdfd" stroke="#ababab"/>
    <path d="M10 18.5H20V12.5H29.5V25.5H10z" fill="#cbdaee"/>
    <path d="M0.5 7.5H29.5M0.5 13H29.5M0.5 19H29.5M10 0.5V25.5M20 0.5V25.5" stroke="#e2e2e2" stroke-width="1" fill="none"/>
    <path d="M10 25.5H29.5V12.5" stroke="#8297b8" stroke-width="1.2" fill="none"/>
    <rect x="0.5" y="0.5" width="11" height="7" fill="#6996d2" stroke="#3d6cb3"/>
    <path d="M10.2 8.2H17.2L15.1 10.3L19.8 15L17 17.8L12.3 13.1L10.2 15.2z" fill="#c0504d"/>
  </svg>


  <div class="sep" style="left:780px;top:486px;width:994px;height:2px;"></div>

  <!-- move up / down -->
  <div class="abs" style="left:1143px;top:508.8px;width:86px;height:44px;box-sizing:border-box;border:2px solid #a3a3a3;background:linear-gradient(180deg,#fbfbfb 0,#ededed 14%,#f1f1f1 50%,#fafafa 100%);"></div>
  <div class="abs" style="left:1184.6px;top:508.8px;width:2px;height:44px;background:#a3a3a3;"></div>
  <svg class="abs" style="left:1151px;top:517px;" width="28" height="26" viewBox="0 0 28 26"><linearGradient id="ga" x1="0" y1="0" x2="0" y2="1"><stop offset="0" stop-color="#7c7c7c"/><stop offset="1" stop-color="#585858"/></linearGradient><path d="M14 2L26 14.3H20V23.6H8V14.3H2z" fill="url(#ga)"/></svg>
  <svg class="abs" style="left:1192.5px;top:517px;" width="28" height="26" viewBox="0 0 28 26"><linearGradient id="gb" x1="0" y1="0" x2="0" y2="1"><stop offset="0" stop-color="#808080"/><stop offset="1" stop-color="#5c5c5c"/></linearGradient><path d="M14 24L26 11.7H20V2.4H8V11.7H2z" fill="url(#gb)"/></svg>

  <!-- series list -->
  <div class="abs" style="left:797.5px;top:567.5px;width:433px;height:270.5px;background:#fff;box-shadow:0 0 0 1px #e3e3e3;"></div>
  <div class="abs" style="left:797.5px;top:567.5px;width:433px;height:38.5px;background:#dcdcdc;"></div>

  <!-- + / - -->
  <div class="abs" style="left:796px;top:856px;width:78px;height:40px;box-sizing:border-box;border:2px solid #b3b3b3;background:linear-gradient(180deg,#fafafa 0,#f5f5f5 100%);"></div>
  <div class="abs" style="left:834px;top:856px;width:2px;height:40px;background:#b3b3b3;"></div>
  <svg class="abs" style="left:804.4px;top:863.6px;" width="24" height="24" viewBox="0 0 24 24"><path d="M12 2.6V21.4M2.6 12H21.4" stroke="#2b2b2b" stroke-width="2.6" fill="none" stroke-linecap="round"/></svg>
  <svg class="abs" style="left:842.5px;top:863.8px;" width="24" height="24" viewBox="0 0 24 24"><path d="M2.6 12H21.4" stroke="#222" stroke-width="2.6" fill="none" stroke-linecap="round"/></svg>

  <!-- switch row/column -->
  <div class="abs" style="left:920px;top:855.5px;width:312.5px;height:40.5px;box-sizing:border-box;border-radius:9px;background:#f3f3f3;border:1px solid #dedede;box-shadow:0 1px 1.5px rgba(0,0,0,.10);"></div>

  <!-- red highlight box -->
  <div class="abs" style="left:1245px;top:539.7px;width:538px;height:217.6px;box-sizing:border-box;border:8.6px solid #e00606;border-radius:3px;"></div>

  <!-- name input (focused) -->
  <div class="abs" style="left:1406px;top:562px;width:356px;height:50px;border-radius:8px;background:#8aa98e;"></div>
  <div class="abs" style="left:1412.5px;top:568.5px;width:342.6px;height:36.8px;background:#fff;"></div>
  <div class="abs" style="left:1448.9px;top:570.3px;width:3.6px;height:31.3px;background:#3f78ee;border-radius:1.8px;"></div>
  <svg class="abs" style="left:1722px;top:574px;" width="30" height="26" viewBox="0 0 30 26">
    <rect x="0.5" y="0.5" width="29" height="25" fill="#fdfdfd" stroke="#ababab"/>
    <path d="M10 18.5H20V12.5H29.5V25.5H10z" fill="#cbdaee"/>
    <path d="M0.5 7.5H29.5M0.5 13H29.5M0.5 19H29.5M10 0.5V25.5M20 0.5V25.5" stroke="#e2e2e2" stroke-width="1" fill="none"/>
    <path d="M10 25.5H29.5V12.5" stroke="#8297b8" stroke-width="1.2" fill="none"/>
    <rect x="0.5" y="0.5" width="11" height="7" fill="#6996d2" stroke="#3d6cb3"/>
    <path d="M10.2 8.2H17.2L15.1 10.3L19.8 15L17 17.8L12.3 13.1L10.2 15.2z" fill="#c0504d"/>
  </svg>


  <!-- y values input -->
  <div class="inp" style="left:1411px;top:691px;width:346px;height:39.5px;"></div>
  <svg class="abs" style="left:1722px;top:697.5px;" width="30" height="26" viewBox="0 0 30 26">
    <rect x="0.5" y="0.5" width="29" height="25" fill="#fdfdfd" stroke="#ababab"/>
    <path d="M10 18.5H20V12.5H29.5V25.5H10z" fill="#cbdaee"/>
    <path d="M0.5 7.5H29.5M0.5 13H29.5M0.5 19H29.5M10 0.5V25.5M20 0.5V25.5" stroke="#e2e2e2" stroke-width="1" fill="none"/>
    <path d="M10 25.5H29.5V12.5" stroke="#8297b8" stroke-width="1.2" fill="none"/>
    <rect x="0.5" y="0.5" width="11" height="7" fill="#6996d2" stroke="#3d6cb3"/>
    <path d="M10.2 8.2H17.2L15.1 10.3L19.8 15L17 17.8L12.3 13.1L10.2 15.2z" fill="#c0504d"/>
  </svg>


  <!-- axis labels input -->
  <div class="inp" style="left:1216px;top:935px;width:541px;height:39.5px;"></div>
  <svg class="abs" style="left:1722px;top:941.5px;" width="30" height="26" viewBox="0 0 30 26">
    <rect x="0.5" y="0.5" width="29" height="25" fill="#fdfdfd" stroke="#ababab"/>
    <path d="M10 18.5H20V12.5H29.5V25.5H10z" fill="#cbdaee"/>
    <path d="M0.5 7.5H29.5M0.5 13H29.5M0.5 19H29.5M10 0.5V25.5M20 0.5V25.5" stroke="#e2e2e2" stroke-width="1" fill="none"/>
    <path d="M10 25.5H29.5V12.5" stroke="#8297b8" stroke-width="1.2" fill="none"/>
    <rect x="0.5" y="0.5" width="11" height="7" fill="#6996d2" stroke="#3d6cb3"/>
    <path d="M10.2 8.2H17.2L15.1 10.3L19.8 15L17 17.8L12.3 13.1L10.2 15.2z" fill="#c0504d"/>
  </svg>


  <div class="sep" style="left:780px;top:1004.3px;width:994px;height:2px;"></div>

  <!-- popup button -->
  <div class="abs" style="left:1082.5px;top:1067.5px;width:248.5px;height:41px;box-sizing:border-box;border-radius:9px;background:#fff;border:1px solid #dcdcdc;box-shadow:0 1px 2px rgba(0,0,0,.16);"></div>
  <div class="abs" style="left:1295px;top:1072px;width:32px;height:32px;border-radius:7px;background:linear-gradient(180deg,#3c8a59 0,#2b7145 100%);"></div>
  <svg class="abs" style="left:1295px;top:1072px;" width="32" height="32" viewBox="0 0 32 32"><path d="M10.5 13L16 7.5L21.5 13M10.5 19.5L16 25L21.5 19.5" stroke="#fff" stroke-width="2.9" fill="none" stroke-linecap="round" stroke-linejoin="round"/></svg>

  <!-- checkboxes -->
  <div class="abs" style="left:811.5px;top:1130px;width:28.5px;height:28.5px;border-radius:7px;background:linear-gradient(180deg,#3b8858 0,#2b7145 100%);"></div>
  <svg class="abs" style="left:811.5px;top:1130px;" width="28.5" height="28.5" viewBox="0 0 29 29"><path d="M7.5 15.2L12.4 21L21.5 8" stroke="#fff" stroke-width="3.5" fill="none" stroke-linecap="round" stroke-linejoin="round"/></svg>
  <div class="abs" style="left:811.5px;top:1180px;width:28.5px;height:28.5px;box-sizing:border-box;border-radius:7px;background:#fff;border:1px solid #d0d0d0;box-shadow:inset 0 1px 1.5px rgba(0,0,0,.08);"></div>

  <!-- buttons -->
  <div class="abs" style="left:1454px;top:1246px;width:140px;height:40px;box-sizing:border-box;border-radius:9px;background:#fff;border:1px solid #dadada;box-shadow:0 1px 2px rgba(0,0,0,.18);"></div>
  <div class="abs" style="left:1618px;top:1246px;width:140px;height:40px;border-radius:9px;background:linear-gradient(180deg,#40895a 0,#2e7447 100%);box-shadow:0 1px 2px rgba(0,0,0,.22);"></div>

<span class="t" style="left:1154.20px;top:219.0px;font-family:'Liberation Sans', sans-serif;font-size:27px;line-height:27px;font-weight:700;font-style:normal;color:#424242;letter-spacing:0.02px;">Select Data Source</span>
<span class="t" style="left:802.60px;top:295.9px;font-family:'Liberation Sans', sans-serif;font-size:26px;line-height:26px;font-weight:700;font-style:normal;color:#242424;letter-spacing:0.41px;">Range Details</span>
<span class="t" style="left:812.20px;top:351.7px;font-family:'Liberation Sans', sans-serif;font-size:26px;line-height:26px;font-weight:400;font-style:normal;color:#242424;letter-spacing:0.65px;-webkit-text-stroke:0.2px #242424;">Chart data range:</span>
<span class="t" style="left:812.90px;top:403.7px;font-family:'Liberation Sans', sans-serif;font-size:26px;line-height:26px;font-weight:400;font-style:normal;color:#242424;letter-spacing:0.43px;-webkit-text-stroke:0.2px #242424;">The Chart Data Range is too complex to be displayed. If a new Data</span>
<span class="t" style="left:811.70px;top:435.7px;font-family:'Liberation Sans', sans-serif;font-size:26px;line-height:26px;font-weight:400;font-style:normal;color:#242424;letter-spacing:0.47px;-webkit-text-stroke:0.2px #242424;">Range is selected, it will replace all of the series on the Series Panel.</span>
<span class="t" style="left:795.90px;top:516.1px;font-family:'Liberation Sans', sans-serif;font-size:26px;line-height:26px;font-weight:400;font-style:normal;color:#242424;letter-spacing:0.60px;-webkit-text-stroke:0.2px #242424;">Legend entries (Series):</span>
<span class="t" style="left:816.00px;top:573.9px;font-family:'Liberation Sans', sans-serif;font-size:26px;line-height:26px;font-weight:400;font-style:normal;color:#242424;letter-spacing:0.91px;-webkit-text-stroke:0.2px #242424;">${status} ${count}</span>
<span class="t" style="left:1315.10px;top:575.0px;font-family:'Liberation Sans', sans-serif;font-size:26px;line-height:26px;font-weight:400;font-style:normal;color:#242424;letter-spacing:0.71px;-webkit-text-stroke:0.2px #242424;">Name:</span>
<span class="t" style="left:1417.90px;top:575.0px;font-family:'Liberation Sans', sans-serif;font-size:26px;line-height:26px;font-weight:400;font-style:normal;color:#242424;letter-spacing:0.46px;-webkit-text-stroke:0.2px #242424;">=Sheet1!$A$7:$B$7</span>
<span class="t" style="left:1286.10px;top:698.7px;font-family:'Liberation Sans', sans-serif;font-size:26px;line-height:26px;font-weight:400;font-style:normal;color:#242424;letter-spacing:0.18px;-webkit-text-stroke:0.2px #242424;">Y values:</span>
<span class="t" style="left:1417.90px;top:698.7px;font-family:'Liberation Sans', sans-serif;font-size:26px;line-height:26px;font-weight:400;font-style:normal;color:#242424;letter-spacing:0.41px;-webkit-text-stroke:0.2px #242424;">=Sheet1!$C$7</span>
<span class="t" style="left:956.20px;top:861.9px;font-family:'Liberation Sans', sans-serif;font-size:26px;line-height:26px;font-weight:400;font-style:normal;color:#b6b6b6;letter-spacing:0.45px;-webkit-text-stroke:0.2px #b6b6b6;">Switch Row/Column</span>
<span class="t" style="left:795.80px;top:943.0px;font-family:'Liberation Sans', sans-serif;font-size:26px;line-height:26px;font-weight:400;font-style:normal;color:#242424;letter-spacing:0.61px;-webkit-text-stroke:0.2px #242424;">Horizontal (Category) axis labels:</span>
<span class="t" style="left:1223.10px;top:943.0px;font-family:'Liberation Sans', sans-serif;font-size:26px;line-height:26px;font-weight:400;font-style:normal;color:#242424;letter-spacing:0.47px;-webkit-text-stroke:0.2px #242424;">=Sheet1!$A$7</span>
<span class="t" style="left:802.60px;top:1034.2px;font-family:'Liberation Sans', sans-serif;font-size:26px;line-height:26px;font-weight:700;font-style:normal;color:#242424;letter-spacing:0.47px;">Hidden and Empty Cells</span>
<span class="t" style="left:812.20px;top:1075.6px;font-family:'Liberation Sans', sans-serif;font-size:26px;line-height:26px;font-weight:400;font-style:normal;color:#242424;letter-spacing:0.60px;-webkit-text-stroke:0.2px #242424;">Show empty cells as:</span>
<span class="t" style="left:1099.00px;top:1074.0px;font-family:'Liberation Sans', sans-serif;font-size:26px;line-height:26px;font-weight:400;font-style:normal;color:#242424;letter-spacing:-0.11px;-webkit-text-stroke:0.2px #242424;">Gaps</span>
<span class="t" style="left:852.20px;top:1131.3px;font-family:'Liberation Sans', sans-serif;font-size:26px;line-height:26px;font-weight:400;font-style:normal;color:#242424;letter-spacing:0.44px;-webkit-text-stroke:0.2px #242424;">Show #N/A as an empty cell</span>
<span class="t" style="left:852.20px;top:1181.4px;font-family:'Liberation Sans', sans-serif;font-size:26px;line-height:26px;font-weight:400;font-style:normal;color:#242424;letter-spacing:0.49px;-webkit-text-stroke:0.2px #242424;">Show data in hidden rows and columns</span>
<span class="t" style="left:1482.30px;top:1251.9px;font-family:'Liberation Sans', sans-serif;font-size:26px;line-height:26px;font-weight:400;font-style:normal;color:#242424;letter-spacing:0.37px;-webkit-text-stroke:0.2px #242424;">Cancel</span>
<span class="t" style="left:1669.40px;top:1251.9px;font-family:'Liberation Sans', sans-serif;font-size:26px;line-height:26px;font-weight:400;font-style:normal;color:#fff;letter-spacing:-2.00px;-webkit-text-stroke:0.4px #fff;">OK</span>
</div>


</div>
</body>
</html>
